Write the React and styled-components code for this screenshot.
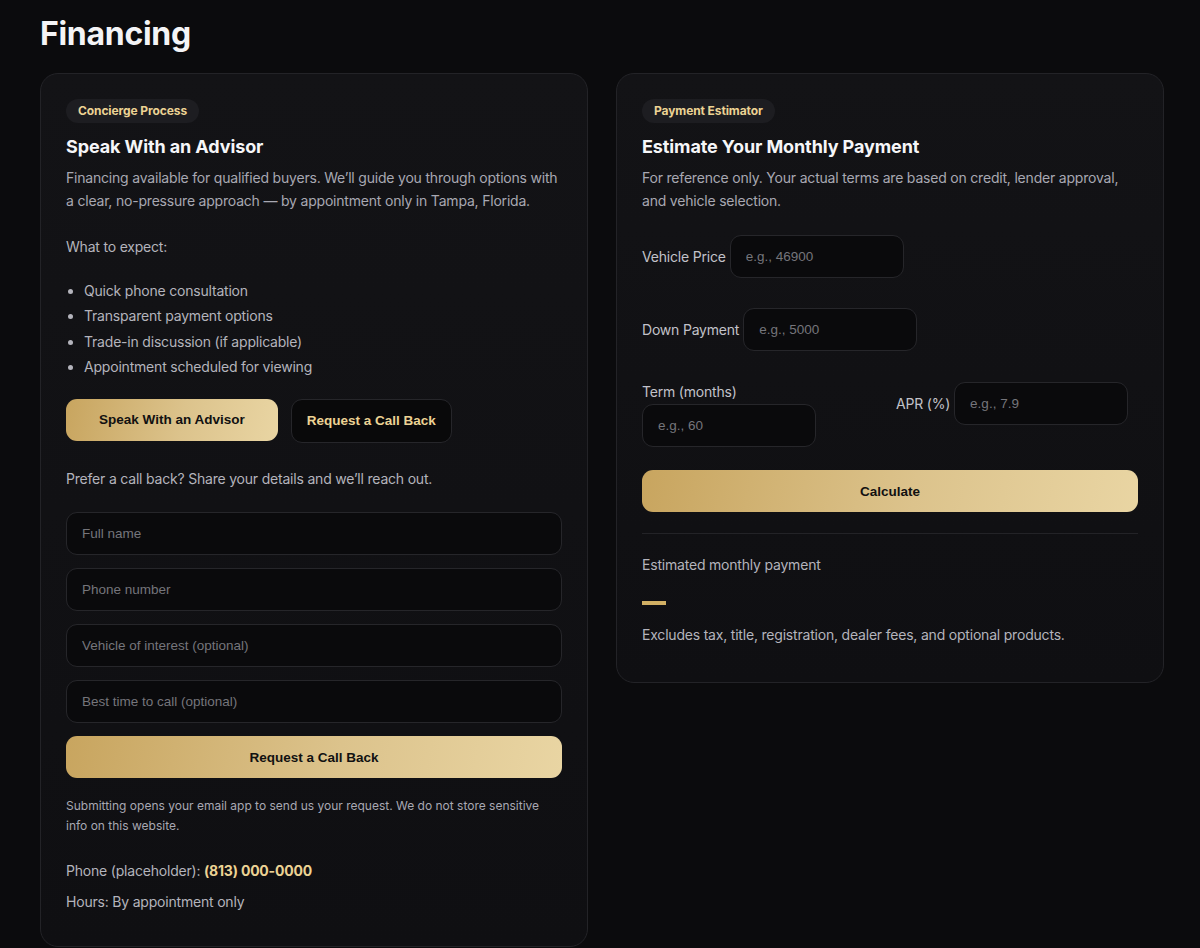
import React from "react";
import styled, { createGlobalStyle } from "styled-components";

const Global = createGlobalStyle`
  html, body { margin: 0; padding: 0; background: #0b0b0d; }
  body { font-family: Inter, "Noto Sans", sans-serif; color: #f2f2f4; -webkit-font-smoothing: antialiased; }
  * { box-sizing: border-box; }
`;

const Page = styled.main`
  padding: 14px 36px 0 40px;
  min-height: 948px;
`;

const Title = styled.h1`
  margin: 0 0 19px;
  font-size: 32px;
  line-height: 40px;
  font-weight: 700;
  letter-spacing: -0.3px;
  color: #f4f4f6;
`;

const Grid = styled.div`
  display: grid;
  grid-template-columns: 548px 548px;
  column-gap: 28px;
  align-items: start;
`;

const Card = styled.section`
  border: 1px solid #232327;
  border-radius: 18px;
  background: linear-gradient(180deg, #131316 0%, #0f0f12 100%);
  padding: 25px 25px ${(p) => p.$pb || 25}px;
`;

const BadgeWrap = styled.div`
  display: flex;
`;

const Badge = styled.span`
  height: 24px;
  line-height: 24px;
  padding: 0 12px;
  border-radius: 12px;
  background: #1d1d21;
  color: #ecd394;
  font-size: 12px;
  font-weight: 700;
  letter-spacing: -0.1px;
`;

const Heading = styled.h2`
  margin: 12px 0 8px;
  font-size: 18px;
  line-height: 24px;
  font-weight: 700;
  color: #f6f6f8;
  letter-spacing: -0.1px;
`;

const Text = styled.p`
  margin: ${(p) => p.$m || "0"};
  font-size: 14px;
  line-height: 22.5px;
  letter-spacing: -0.2px;
  color: ${(p) => p.$c || "#a8a8b2"};
`;

const List = styled.ul`
  margin: 19px 0 19px;
  padding-left: 18px;
  font-size: 14px;
  line-height: 25.5px;
  letter-spacing: -0.2px;
  color: #b4b4bc;
  li::marker { color: #b4b4bc; }
`;

const Row = styled.div`
  display: flex;
  gap: 13px;
  margin-top: ${(p) => p.$mt || 0}px;
`;

const GoldButton = styled.button`
  height: 42px;
  padding: 0 33px;
  border: none;
  border-radius: 11px;
  background: linear-gradient(100deg, #c8a55f 0%, #dcc38c 55%, #e9d5a3 100%);
  color: #111;
  font-family: "Liberation Sans", Arial, sans-serif;
  font-size: 13.5px;
  font-weight: 700;
  width: ${(p) => (p.$full ? "100%" : "auto")};
  cursor: pointer;
`;

const DarkButton = styled.button`
  height: 44px;
  padding: 0 15px;
  border: 1px solid #26262a;
  border-radius: 11px;
  background: #09090a;
  color: #ecd394;
  font-family: "Liberation Sans", Arial, sans-serif;
  font-size: 13.5px;
  font-weight: 700;
  cursor: pointer;
`;

const Form = styled.form`
  display: flex;
  flex-direction: column;
  gap: 13px;
  margin-top: 22px;
`;

const Input = styled.input`
  height: 43px;
  width: ${(p) => p.$w || "100%"};
  padding: 0 15px;
  border: 1px solid #26262a;
  border-radius: 11px;
  background: #0a0a0c;
  color: #eee;
  font-family: "Liberation Sans", Arial, sans-serif;
  font-size: 13.5px;
  outline: none;
  &::placeholder { color: #75757b; }
`;

const Small = styled.p`
  margin: 18px 0 0;
  font-size: 12px;
  line-height: 20px;
  color: #a8a8b2;
`;

const Info = styled.p`
  margin: ${(p) => p.$m || "0"};
  font-size: 14px;
  line-height: 22px;
  letter-spacing: -0.2px;
  color: #b4b4bc;
`;

const Phone = styled.strong`
  color: #ecd394;
  font-weight: 700;
`;

const Field = styled.div`
  display: flex;
  flex-wrap: wrap;
  align-items: center;
  column-gap: 4px;
  row-gap: 2px;
  margin-top: ${(p) => p.$mt || 0}px;
`;

const Label = styled.label`
  font-size: 14px;
  line-height: 20px;
  letter-spacing: -0.2px;
  color: #c2c2c9;
`;

const Pair = styled.div`
  display: grid;
  grid-template-columns: 1fr 1fr;
  column-gap: 12px;
  margin-top: 31px;
  align-items: start;
`;

const Divider = styled.hr`
  border: none;
  border-top: 1px solid #232327;
  margin: 21px 0 0;
`;

const Dash = styled.div`
  width: 24px;
  height: 4px;
  background: #d2b064;
  margin: 24px 0 0;
`;

export default function App() {
  return (
    <>
      <Global />
      <Page>
        <Title>Financing</Title>
        <Grid>
          <Card $pb={33}>
            <BadgeWrap>
              <Badge>Concierge Process</Badge>
            </BadgeWrap>
            <Heading>Speak With an Advisor</Heading>
            <Text>
              Financing available for qualified buyers. We’ll guide you through options with a clear,
              no-pressure approach — by appointment only in Tampa, Florida.
            </Text>
            <Text $m="24px 0 0" $c="#b4b4bc">What to expect:</Text>
            <List>
              <li>Quick phone consultation</li>
              <li>Transparent payment options</li>
              <li>Trade-in discussion (if applicable)</li>
              <li>Appointment scheduled for viewing</li>
            </List>
            <Row>
              <GoldButton type="button">Speak With an Advisor</GoldButton>
              <DarkButton type="button">Request a Call Back</DarkButton>
            </Row>
            <Text $m="25px 0 0" $c="#b4b4bc">Prefer a call back? Share your details and we’ll reach out.</Text>
            <Form onSubmit={(e) => e.preventDefault()}>
              <Input placeholder="Full name" />
              <Input placeholder="Phone number" />
              <Input placeholder="Vehicle of interest (optional)" />
              <Input placeholder="Best time to call (optional)" />
              <GoldButton $full type="submit">Request a Call Back</GoldButton>
            </Form>
            <Small>
              Submitting opens your email app to send us your request. We do not store sensitive info on
              this website.
            </Small>
            <Info $m="24px 0 0">
              Phone (placeholder): <Phone>(813) 000-0000</Phone>
            </Info>
            <Info $m="9px 0 0">Hours: By appointment only</Info>
          </Card>

          <Card $pb={36}>
            <BadgeWrap>
              <Badge>Payment Estimator</Badge>
            </BadgeWrap>
            <Heading>Estimate Your Monthly Payment</Heading>
            <Text>
              For reference only. Your actual terms are based on credit, lender approval, and vehicle
              selection.
            </Text>
            <Field $mt={23}>
              <Label>Vehicle Price</Label>
              <Input $w="174px" placeholder="e.g., 46900" />
            </Field>
            <Field $mt={30}>
              <Label>Down Payment</Label>
              <Input $w="174px" placeholder="e.g., 5000" />
            </Field>
            <Pair>
              <Field>
                <Label>Term (months)</Label>
                <Input $w="174px" placeholder="e.g., 60" />
              </Field>
              <Field>
                <Label>APR (%)</Label>
                <Input $w="174px" placeholder="e.g., 7.9" />
              </Field>
            </Pair>
            <Row $mt={23}>
              <GoldButton $full type="button">Calculate</GoldButton>
            </Row>
            <Divider />
            <Text $m="20px 0 0" $c="#b4b4bc">Estimated monthly payment</Text>
            <Dash />
            <Text $m="19px 0 0" $c="#b4b4bc">Excludes tax, title, registration, dealer fees, and optional products.</Text>
          </Card>
        </Grid>
      </Page>
    </>
  );
}
